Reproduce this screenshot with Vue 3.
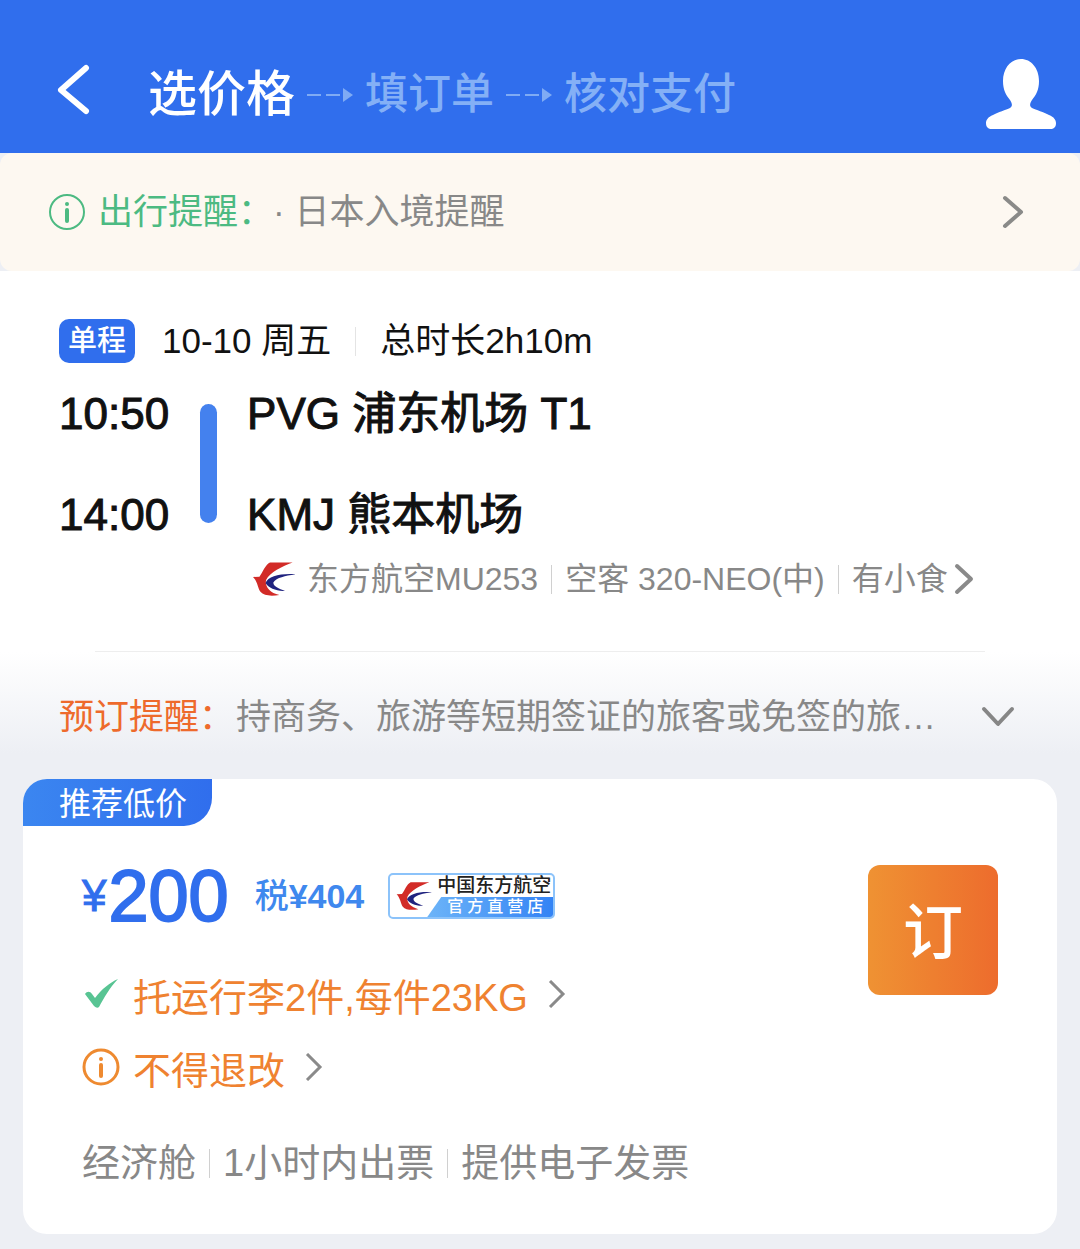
<template>
  <div class="page">
    <header class="topbar">
      <button class="icon-btn back" type="button" aria-label="返回">
        <svg width="36" height="54" viewBox="0 0 36 54">
          <path d="M30 4 L5 26 L30 47" fill="none" stroke="#fff" stroke-width="6" stroke-linecap="round" stroke-linejoin="round" />
        </svg>
      </button>
      <nav class="steps">
        <template v-for="(step, index) in steps" :key="step">
          <svg v-if="index > 0" class="step-arrow" width="48" height="16" viewBox="0 0 48 16">
            <path d="M1 8 H15 M20 8 H34" stroke="#7fabf4" stroke-width="2" />
            <path d="M37 1 L47 8 L37 15 Z" fill="#7fabf4" />
          </svg>
          <span :class="['step', { active: index === 0 }]">{{ step }}</span>
        </template>
      </nav>
      <button class="icon-btn user" type="button" aria-label="我的">
        <svg width="70" height="70" viewBox="0 0 70 70">
          <path d="M35 0 C45 0 53 9 53 22 C53 31 50 36 46 41 C44 44 43 47 46 49 C50 51 58 53 63 56 C68 58 70 61 70 64 C70 68 68 70 64 70 H6 C2 70 0 68 0 64 C0 61 2 58 7 56 C12 53 20 51 24 49 C27 47 26 44 24 41 C20 36 17 31 17 22 C17 9 25 0 35 0 Z" fill="#fff" />
        </svg>
      </button>
    </header>

    <a class="notice" href="#">
      <svg class="info" width="36" height="36" viewBox="0 0 36 36">
        <circle cx="18" cy="18" r="17" fill="none" stroke="#4cba82" stroke-width="2" />
        <circle cx="18" cy="10" r="2" fill="#4cba82" />
        <path d="M18 16 V27" stroke="#4cba82" stroke-width="4" stroke-linecap="round" />
      </svg>
      <span class="notice-label">出行提醒：</span>
      <span class="notice-text">· 日本入境提醒</span>
      <svg class="notice-arrow" width="22" height="34" viewBox="0 0 22 34">
        <path d="M3 3 L19 17 L3 31" fill="none" stroke="#8a8a88" stroke-width="4" stroke-linecap="round" stroke-linejoin="round" />
      </svg>
    </a>

    <section class="flight">
      <div class="trip">
        <span class="badge">单程</span>
        <span>10-10 周五</span>
        <i class="divider"></i>
        <span>总时长2h10m</span>
      </div>
      <div class="route">
        <div class="stops">
          <span>10:50</span>
          <span>14:00</span>
        </div>
        <div class="bar"></div>
        <div class="stops">
          <span>PVG 浦东机场 T1</span>
          <span>KMJ 熊本机场</span>
        </div>
      </div>
      <a class="plane" href="#">
        <svg class="logo" width="42" height="34" viewBox="0 0 124 100">
          <path d="M0 44 L19 43 C30 28 36 8 50 1 L117 1 C86 13 50 30 39 52 C34 68 46 90 78 97 C52 102 32 99 22 88 C14 78 14 58 0 44 Z" fill="#d22b27" />
          <path d="M124 36 C82 33 44 42 37 62 C46 77 70 87 95 85 C76 78 60 72 60 60 C70 46 95 41 124 37 Z" fill="#20237f" />
        </svg>
        <span>东方航空MU253</span>
        <i class="divider"></i>
        <span>空客 320-NEO(中)</span>
        <i class="divider"></i>
        <span>有小食</span>
        <svg class="plane-arrow" width="20" height="32" viewBox="0 0 20 32">
          <path d="M3 3 L17 16 L3 29" fill="none" stroke="#8a8a8a" stroke-width="4" stroke-linecap="round" stroke-linejoin="round" />
        </svg>
      </a>
      <hr class="line" />
    </section>

    <button class="remind" type="button">
      <span class="remind-label">预订提醒：</span>
      <span class="remind-text">持商务、旅游等短期签证的旅客或免签的旅…</span>
      <svg class="remind-arrow" width="34" height="22" viewBox="0 0 34 22">
        <path d="M3 3 L17 18 L31 3" fill="none" stroke="#868686" stroke-width="4" stroke-linecap="round" stroke-linejoin="round" />
      </svg>
    </button>

    <article class="card">
      <span class="tag">推荐低价</span>
      <div class="card-body">
        <div class="offer">
          <div class="price-row">
            <span class="price"><small>¥</small>200</span>
            <span class="tax">税<b>¥404</b></span>
            <span class="store">
              <svg class="store-logo" width="38" height="28" viewBox="0 0 124 100">
                <path d="M0 44 L19 43 C30 28 36 8 50 1 L117 1 C86 13 50 30 39 52 C34 68 46 90 78 97 C52 102 32 99 22 88 C14 78 14 58 0 44 Z" fill="#d22b27" />
                <path d="M124 36 C82 33 44 42 37 62 C46 77 70 87 95 85 C76 78 60 72 60 60 C70 46 95 41 124 37 Z" fill="#20237f" />
              </svg>
              <span class="store-text">
                <span class="store-name">中国东方航空</span>
                <span class="store-type">官方直营店</span>
              </span>
            </span>
          </div>
          <a class="rule" href="#">
            <svg class="rule-icon" width="38" height="38" viewBox="0 0 38 38">
              <path d="M3 19 C5 16 8 16 10 19 L13 23 C20 14 27 8 36 4 C28 12 22 23 17 32 Q15 34 12 31 Z" fill="#58c493" />
            </svg>
            <span>托运行李2件,每件23KG</span>
            <svg class="rule-arrow" width="18" height="28" viewBox="0 0 18 28">
              <path d="M2 1 L15 14 L2 27" fill="none" stroke="#8a8a8a" stroke-width="3" />
            </svg>
          </a>
          <a class="rule" href="#">
            <svg class="rule-icon" width="38" height="38" viewBox="0 0 38 38">
              <circle cx="19" cy="19" r="17" fill="none" stroke="#ee8a30" stroke-width="3" />
              <circle cx="19" cy="11" r="2" fill="#ee8a30" />
              <path d="M19 17 V28" stroke="#ee8a30" stroke-width="4" stroke-linecap="round" />
            </svg>
            <span>不得退改</span>
            <svg class="rule-arrow" width="18" height="28" viewBox="0 0 18 28">
              <path d="M2 1 L15 14 L2 27" fill="none" stroke="#8a8a8a" stroke-width="3" />
            </svg>
          </a>
          <div class="extras">
            <template v-for="(item, index) in extras" :key="item">
              <i v-if="index > 0" class="divider"></i>
              <span>{{ item }}</span>
            </template>
          </div>
        </div>
        <button class="book" type="button">订</button>
      </div>
    </article>
  </div>
</template>

<script setup>
// 预订步骤
const steps = ['选价格', '填订单', '核对支付']

// 舱位和出票信息
const extras = ['经济舱', '1小时内出票', '提供电子发票']
</script>

<style>
body {
  margin: 0;
  background: #edeff4;
}
</style>

<style scoped>
.page {
  font-family: "Liberation Sans", "Noto Sans CJK SC", sans-serif;
  font-size: 35px;
  line-height: 48px;
  color: #111;
  padding-bottom: 15px;
  white-space: nowrap;
}

svg {
  display: block;
  flex: none;
}

a {
  color: inherit;
  text-decoration: none;
}

button {
  font-family: inherit;
  border: none;
  padding: 0;
  background: none;
  cursor: pointer;
}

.topbar {
  display: flex;
  align-items: center;
  padding: 54px 24px 18px 56px;
  background: #306eed;
}

.back {
  margin-bottom: 8px;
}

.user {
  margin-bottom: 2px;
}

.steps {
  display: flex;
  flex: 1;
  align-items: center;
  gap: 11px;
  margin-left: 56px;
  line-height: 81px;
}

.step {
  font-size: 43px;
  font-weight: 500;
  color: #84b0f6;
}

.step.active {
  font-size: 49px;
  color: #fff;
}

.notice {
  display: flex;
  align-items: center;
  padding: 35px 56px 35px 49px;
  border-radius: 12px;
  background: #fdf8f1;
}

.notice-label {
  margin-left: 13px;
  color: #4cba82;
}

.notice-text {
  flex: 1;
  color: #888;
}

.flight {
  padding: 48px 59px 0;
  background: #fff;
}

.trip {
  display: flex;
  align-items: center;
  line-height: 44px;
}

.badge {
  margin-right: 27px;
  padding: 0 9px;
  border-radius: 10px;
  background: #306eed;
  color: #fff;
  font-size: 29px;
  font-weight: 500;
}

.divider {
  width: 1px;
  height: 29px;
  margin: 0 13px;
  background: #d0d0d0;
}

.trip .divider {
  margin: 0 24px;
  background: #e4e4e4;
}

.route {
  display: flex;
  margin-top: 27px;
  font-size: 44px;
  -webkit-text-stroke: 1px currentColor;
}

.stops {
  display: flex;
  flex-direction: column;
  gap: 53px;
}

.bar {
  width: 17px;
  margin: 14px 30px 16px 31px;
  border-radius: 9px;
  background: #4481ee;
}

.plane {
  display: flex;
  align-items: center;
  margin: 20px 0 52px 194px;
  font-size: 32px;
  line-height: 40px;
  color: #888;
}

.logo {
  margin-right: 12px;
}

.plane-arrow {
  margin-left: 6px;
}

.line {
  height: 1px;
  margin: 0 36px;
  border: none;
  background: #eee;
}

.remind {
  display: flex;
  align-items: center;
  width: 100%;
  padding: 41px 65px 38px 59px;
  background: linear-gradient(#fff, #edeff4 80%);
  font-size: 35px;
  line-height: 48px;
  text-align: left;
}

.remind-label {
  margin-right: 2px;
  color: #ee6a2c;
}

.remind-text {
  flex: 1;
  color: #888;
}

.card {
  margin: 0 23px;
  border-radius: 24px;
  background: #fff;
  overflow: hidden;
}

.tag {
  display: inline-block;
  padding: 3px 25px 0 36px;
  border-radius: 0 0 28px 0;
  background: linear-gradient(90deg, #3b86f0, #306eed);
  color: #fff;
  font-size: 32px;
  line-height: 44px;
  vertical-align: top;
}

.card-body {
  display: flex;
  align-items: flex-start;
  justify-content: space-between;
  padding: 29px 59px 47px;
}

.price-row {
  display: flex;
  align-items: center;
  height: 80px;
}

.price {
  display: flex;
  align-items: center;
  color: #306eed;
  font-size: 72px;
  line-height: 80px;
  -webkit-text-stroke: 2px currentColor;
}

.price small {
  margin-right: 2px;
  font-size: 44px;
  -webkit-text-stroke: 1px currentColor;
}

.tax {
  margin: 0 24px 0 26px;
  color: #3f88ee;
  font-size: 34px;
  font-weight: 500;
}

.store {
  display: flex;
  align-items: center;
  box-sizing: border-box;
  height: 46px;
  border: 2px solid #8cc3fa;
  border-radius: 5px;
  overflow: hidden;
}

.store-logo {
  margin-left: 5px;
}

.store-text {
  display: flex;
  flex-direction: column;
}

.store-name {
  padding: 0 2px 0 4px;
  color: #222;
  font-size: 19px;
  font-weight: 500;
  line-height: 22px;
}

.store-type {
  margin-left: -6px;
  padding-left: 20px;
  background: linear-gradient(90deg, #6cb4f8, #3383f5);
  clip-path: polygon(14px 0, 100% 0, 100% 100%, 0 100%);
  color: #fff;
  font-size: 16px;
  font-weight: 500;
  line-height: 20px;
  letter-spacing: 4px;
}

.rule {
  display: flex;
  align-items: center;
  margin-top: 25px;
  color: #ef8230;
  font-size: 38px;
}

.price-row + .rule {
  margin-top: 38px;
}

.rule svg {
  margin-bottom: 8px;
}

.rule-icon {
  margin-right: 13px;
}

.rule-arrow {
  margin-left: 20px;
}

.extras {
  display: flex;
  align-items: center;
  margin-top: 44px;
  color: #888;
  font-size: 38px;
}

.book {
  width: 130px;
  height: 130px;
  margin-top: 9px;
  padding-bottom: 6px;
  border-radius: 12px;
  background: linear-gradient(90deg, #ef9233, #ed6c2d);
  color: #fff;
  font-size: 60px;
  font-weight: 500;
}
</style>
